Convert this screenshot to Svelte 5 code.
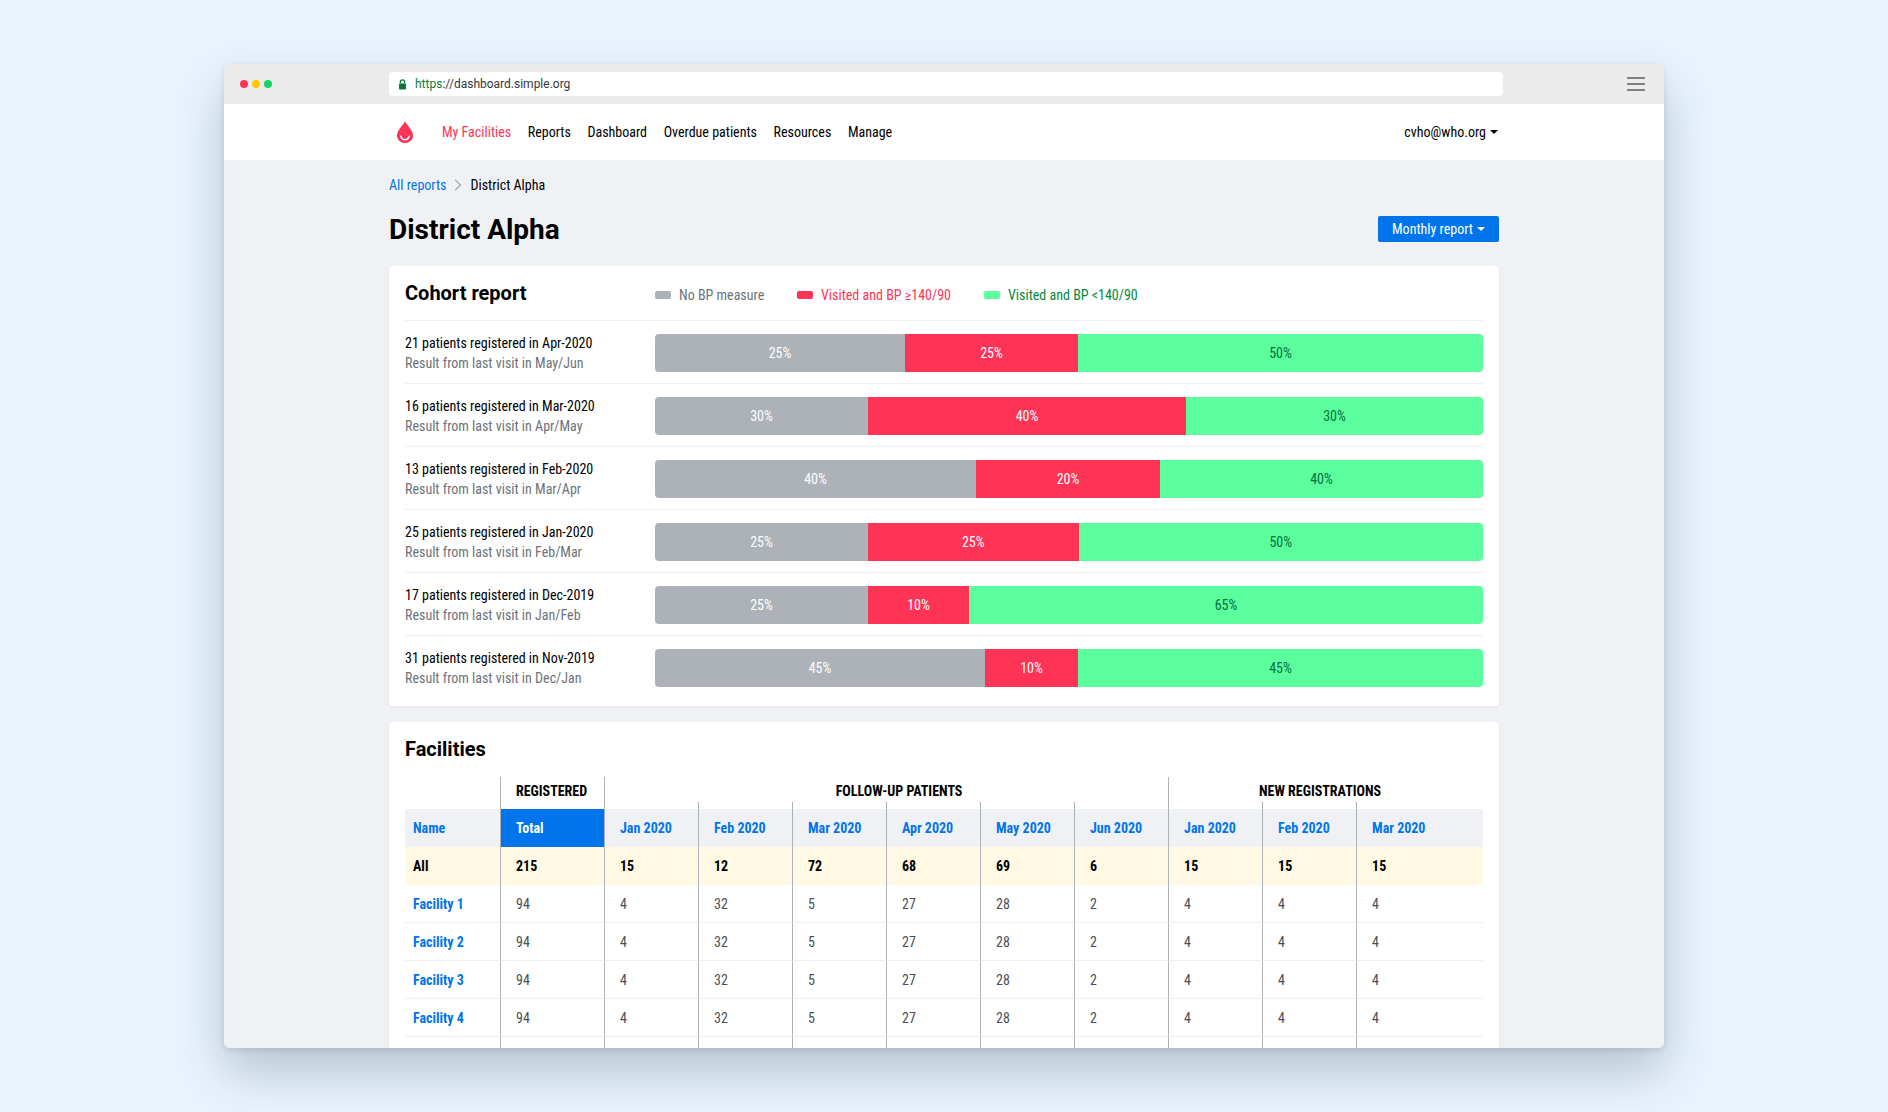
<script>
  const cohorts = [
    { a: '21 patients registered in Apr-2020', b: 'Result from last visit in May/Jun', s: [[250, 25], [173, 25], [405, 50]] },
    { a: '16 patients registered in Mar-2020', b: 'Result from last visit in Apr/May', s: [[213, 30], [318, 40], [297, 30]] },
    { a: '13 patients registered in Feb-2020', b: 'Result from last visit in Mar/Apr', s: [[321, 40], [184, 20], [323, 40]] },
    { a: '25 patients registered in Jan-2020', b: 'Result from last visit in Feb/Mar', s: [[213, 25], [210.5, 25], [404.5, 50]] },
    { a: '17 patients registered in Dec-2019', b: 'Result from last visit in Jan/Feb', s: [[213, 25], [101, 10], [514, 65]] },
    { a: '31 patients registered in Nov-2019', b: 'Result from last visit in Dec/Jan', s: [[330, 45], [93, 10], [405, 45]] }
  ];
  const kinds = ['grey', 'red', 'green'];
  const months = ['Jan 2020', 'Feb 2020', 'Mar 2020', 'Apr 2020', 'May 2020', 'Jun 2020', 'Jan 2020', 'Feb 2020', 'Mar 2020'];
  const allRow = [215, 15, 12, 72, 68, 69, 6, 15, 15, 15];
  const row = [94, 4, 32, 5, 27, 28, 2, 4, 4, 4];
  const facilities = ['Facility 1', 'Facility 2', 'Facility 3', 'Facility 4'];
  const nav = ['Reports', 'Dashboard', 'Overdue patients', 'Resources', 'Manage'];
</script>

<div class="stage">
  <div class="window">
    <div class="chrome">
      <div class="dots"><i class="d1"></i><i class="d2"></i><i class="d3"></i></div>
      <div class="address">
        <svg width="9" height="11" viewBox="0 0 9 11"><path d="M2.300 4.500V3a2.200 2.200 0 0 1 4.400 0v1.500" fill="none" stroke="#0a7a3c" stroke-width="1.200"/><rect x="1" y="4.500" width="7" height="6" rx="1" fill="#0a7a3c"/></svg>
        <span><b>https</b>://dashboard.simple.org</span>
      </div>
      <div class="burger"><i></i><i></i><i></i></div>
    </div>
    <nav class="nav">
      <svg class="logo" width="16" height="22" viewBox="0 0 16 22">
        <path d="M8 0C6.900 3.600 0 9.200 0 14.500 0 18.800 3.600 22 8 22s8-3.200 8-7.500C16 9.200 9.100 3.600 8 0Z" fill="#ff3355"/>
        <path d="M3.800 15.200c.6 2.200 2.200 3.400 4.200 3.400s3.600-1.200 4.200-3.400" fill="none" stroke="#fff" stroke-width="1.400" stroke-linecap="round"/>
      </svg>
      <a class="active" href="#a">My Facilities</a>
      {#each nav as item}<a href="#a">{item}</a>{/each}
      <span class="user">cvho@who.org<i class="caret"></i></span>
    </nav>
    <main class="body">
      <div class="crumbs">
        <a href="#a">All reports</a>
        <svg width="8" height="12" viewBox="0 0 8 12"><path d="M1 .7L6.500 6 1 11.300" fill="none" stroke="#adb2b8" stroke-width="1.500"/></svg>
        <span>District Alpha</span>
      </div>
      <header class="title">
        <h1>District Alpha</h1>
        <button>Monthly report<i class="caret"></i></button>
      </header>
      <section class="card cohort">
        <div class="cohead">
          <h2>Cohort report</h2>
          <div class="legend">
            <span class="lg-grey"><i></i>No BP measure</span>
            <span class="lg-red"><i></i>Visited and BP ≥140/90</span>
            <span class="lg-green"><i></i>Visited and BP &lt;140/90</span>
          </div>
        </div>
        {#each cohorts as c}
          <div class="corow">
            <div class="label"><div>{c.a}</div><div class="sub">{c.b}</div></div>
            <div class="bar">
              {#each c.s as seg, i}
                <div class={kinds[i]} style="width:{seg[0]}px">{seg[1]}%</div>
              {/each}
            </div>
          </div>
        {/each}
      </section>
      <section class="card facilities">
        <h2>Facilities</h2>
        <table>
          <colgroup>
            <col class="c-name" /><col class="c-total" />
            {#each months.slice(0, 8) as m}<col class="c-m" />{/each}
            <col />
          </colgroup>
          <thead>
            <tr class="groups">
              <th class="blank"></th>
              <th class="lined">REGISTERED</th>
              <th class="lined follow" colspan="6">FOLLOW-UP PATIENTS</th>
              <th class="lined newreg" colspan="3">NEW REGISTRATIONS</th>
            </tr>
            <tr class="heads">
              <th>Name</th>
              <th class="lined total">Total</th>
              {#each months as m, i}
                <th class="lined" class:up={i !== 0 && i !== 6}>{m}</th>
              {/each}
            </tr>
          </thead>
          <tbody>
            <tr class="all">
              <td>All</td>
              {#each allRow as v}<td class="lined">{v}</td>{/each}
            </tr>
            {#each facilities as f}
              <tr>
                <td class="fname">{f}</td>
                {#each row as v}<td class="lined">{v}</td>{/each}
              </tr>
            {/each}
            <tr>
              <td></td>
              {#each row as v}<td class="lined"></td>{/each}
            </tr>
          </tbody>
        </table>
      </section>
    </main>
  </div>
</div>

<style>
  :global(body) { margin: 0; background: #e8f3fd; }
  .stage {
    width: 1888px; height: 1112px; padding: 64px 0 0 224px; box-sizing: border-box; overflow: hidden;
    font-family: "Roboto Condensed", Roboto, sans-serif; font-stretch: 75%; font-size: 14px; color: #000;
  }
  .window {
    width: 1440px; height: 984px; overflow: hidden; border-radius: 8px 8px 5px 5px;
    display: flex; flex-direction: column; background: #f0f1f5;
    box-shadow: 0 24px 48px rgba(30, 50, 70, 0.24), 0 2px 6px rgba(30, 50, 70, 0.12);
  }
  .chrome {
    height: 40px; flex: none; background: #ebebeb; display: flex; align-items: center;
    padding-left: 16px;
  }
  .dots { display: flex; gap: 4px; width: 149px; }
  .dots i { width: 8px; height: 8px; border-radius: 50%; }
  .d1 { background: #ff3355; } .d2 { background: #ffc800; } .d3 { background: #17d36b; }
  .address {
    width: 1114px; height: 24px; background: #fff; border-radius: 4px; display: flex; align-items: center; gap: 8px;
    padding-left: 9px; box-sizing: border-box; font-family: Roboto, sans-serif; font-stretch: 100%; font-size: 12px; color: #33383d;
  }
  .address b { font-weight: 400; color: #0a7a3c; }
  .burger { margin-left: 124px; display: flex; flex-direction: column; gap: 4px; }
  .burger i { display: block; width: 18px; height: 2px; background: #7c7f85; }
  .nav { height: 56px; flex: none; background: #fff; display: flex; align-items: center; padding: 0 166px 0 173px; gap: 16.6px; }
  .logo { margin-right: 12.4px; }
  .nav a { color: #000; text-decoration: none; }
  .nav a.active { color: #ff3355; }
  .user { margin-left: auto; display: flex; align-items: center; }
  .caret { display: inline-block; width: 0; height: 0; margin-left: 4px; border: 4px solid transparent; border-top-color: currentColor; border-top-width: 4.500px; border-bottom: 0; }
  .body { padding: 0 165px; }
  .crumbs { display: flex; align-items: center; height: 18px; margin-top: 16px; gap: 8px; }
  .crumbs a { color: #0075eb; text-decoration: none; }
  .title { display: flex; justify-content: space-between; align-items: center; margin-top: 16px; height: 38px; }
  h1 { margin: 0; padding-top: 2px; font: 700 28px/36px Roboto, sans-serif; font-stretch: 100%; }
  button {
    height: 26px; width: 121px; border: 0; padding: 0; border-radius: 2px; background: #0075eb; color: #fff; font: inherit;
    display: flex; align-items: center; justify-content: center;
  }
  .card { background: #fff; border-radius: 4px; box-shadow: 0 1px 3px rgba(0, 0, 0, .05); padding: 0 16px; }
  .cohort { margin-top: 18px; height: 440px; box-sizing: border-box; }
  h2 { margin: 0; font: 700 20px/28px Roboto, sans-serif; font-stretch: 100%; }
  .cohead { display: flex; align-items: center; height: 54px; }
  .cohead h2 { width: 250px; margin-top: -1px; }
  .legend { display: flex; }
  .legend span { display: flex; align-items: center; gap: 8px; margin-top: 3px; }
  .legend i { width: 16px; height: 8px; border-radius: 2px; }
  .lg-grey { color: #6c737a; width: 142px; } .lg-grey i { background: #adb2b8; }
  .lg-red { color: #ff3355; width: 187px; } .lg-red i { background: #ff3355; }
  .lg-green { color: #008a3e; } .lg-green i { background: #5cff9d; }
  .corow { display: flex; align-items: center; padding-top: 2px; box-sizing: border-box; height: 63px; border-top: 1px solid #eef0f3; }
  .label { width: 250px; line-height: 20px; }
  .sub { color: #6c737a; }
  .bar { display: flex; width: 828px; height: 38px; border-radius: 4px; overflow: hidden; }
  .bar div { display: flex; align-items: center; justify-content: center; }
  .grey { background: #adb2b8; color: #fff; }
  .red { background: #ff3355; color: #fff; }
  .green { background: #5cff9d; color: #00703a; }
  .facilities { margin-top: 16px; padding-top: 13px; height: 340px; overflow: hidden; box-sizing: border-box; }
  table { border-collapse: separate; border-spacing: 0; table-layout: fixed; width: 1078px; margin-top: 14px; }
  .c-name { width: 95px; } .c-total { width: 104px; } .c-m { width: 94px; }
  th, td { padding: 0 0 0 15px; text-align: left; height: 38px; font-weight: 400; box-sizing: border-box; }
  td:first-child, .heads th:first-child { padding-left: 8px; }
  .lined { border-left: 1px solid #adb2b8; position: relative; }
  .groups th { height: 32px; font-weight: 700; color: #000; padding-bottom: 4px; }
  .groups .follow { text-align: center; padding-left: 25px; }
  .groups .newreg { text-align: center; padding: 0 12px 4px 0; }
  .heads th { background: #f0f1f5; color: #0075eb; font-weight: 700; }
  .heads .total { background: #0075eb; color: #fff; }
  .heads .up::before { content: ""; position: absolute; left: -1px; top: -7px; height: 7px; width: 1px; background: #adb2b8; }
  tbody td { border-bottom: 1px solid #eef0f3; color: #4a4f55; }
  tbody .all td { background: #fff9e3; color: #000; font-weight: 700; border-bottom: 0; }
  tbody td.fname { color: #0075eb; font-weight: 700; }
</style>
